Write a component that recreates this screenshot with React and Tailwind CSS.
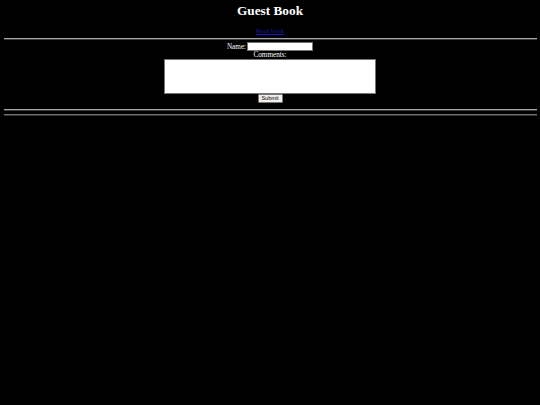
export default function App() {
  return (
    <div
      className="min-h-[405px] bg-black px-[3.5px] text-white"
      style={{ fontFamily: '"Liberation Serif", "Times New Roman", serif' }}
    >
      <h1 className="pt-[4px] text-center text-[13.3px] font-bold leading-[14px]">Guest Book</h1>
      <p className="mt-[9px] text-center text-[6.5px] leading-[7px]">
        <a href="#" className="text-[#1a1ab0] underline">
          Read book
        </a>
      </p>
      <div className="mt-[4px] h-px bg-[#a8a8a8]" />
      <div className="h-px bg-[#3a3a3a]" />

      <form className="mt-[2px] flex flex-col items-center text-[7.2px] leading-[8px]">
        <div className="flex h-[9px] items-center gap-[1px]">
          <label>Name:</label>
          <input
            type="text"
            className="h-[9px] w-[66px] border border-[#767676] bg-white"
          />
        </div>
        <div className="h-[8px]">Comments:</div>
        <textarea className="block h-[35px] w-[212px] resize-none border border-[#767676] bg-white" />
        <button
          type="button"
          className="h-[9px] w-[25px] rounded-[1px] border border-[#767676] bg-[#efefef] text-[5.5px] leading-[7px] text-black"
          style={{ fontFamily: '"Liberation Sans", Arial, sans-serif' }}
        >
          Submit
        </button>
      </form>

      <div className="mt-[6px] h-px bg-[#a8a8a8]" />
      <div className="h-px bg-[#3a3a3a]" />
      <div className="mt-[3px] h-px bg-[#707070]" />
      <div className="h-px bg-[#333333]" />
    </div>
  );
}
